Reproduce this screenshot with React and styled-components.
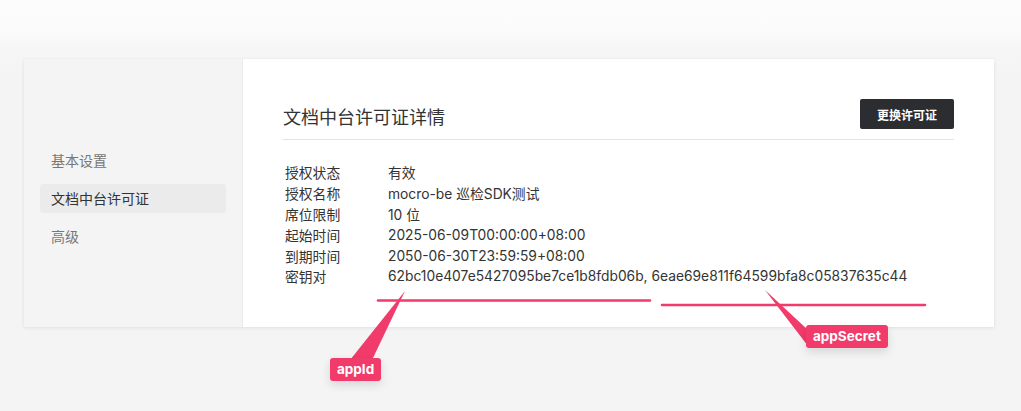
import React from 'react'
import styled, { createGlobalStyle } from 'styled-components'

const GlobalStyle = createGlobalStyle`
  html, body {
    margin: 0;
    padding: 0;
  }
  body {
    font-family: Inter, "Noto Sans CJK SC", "Noto Sans", sans-serif;
    background: #f4f4f4;
  }
`;

const Page = styled.div`
  position: relative;
  width: 1021px;
  height: 411px;
  box-sizing: border-box;
  padding: 59px 27px 0 24px;
  background: linear-gradient(to bottom, #fcfcfc 0px, #fbfbfb 30px, #f6f6f6 50px, #f4f4f4 80px);
  overflow: hidden;
`;

const Card = styled.div`
  display: flex;
  height: 268px;
  background: #fff;
  box-shadow: 0 1px 4px rgba(0, 0, 0, 0.08), 0 0 1px rgba(0, 0, 0, 0.06);
`;

const Sidebar = styled.div`
  width: 219px;
  flex-shrink: 0;
  background: #f4f4f4;
  border-right: 1px solid #ebebeb;
  box-sizing: border-box;
  padding: 87px 16px 0 16px;
  display: flex;
  flex-direction: column;
  gap: 9px;
`;

const NavItem = styled.div`
  height: 29px;
  line-height: 29px;
  padding-left: 11px;
  border-radius: 3px;
  font-size: 14px;
  color: ${({ active }) => (active ? '#333' : '#777')};
  background: ${({ active }) => (active ? '#ebebeb' : 'transparent')};
`;

const Main = styled.div`
  flex: 1;
  padding: 40px 40px 0 40px;
`;

const Header = styled.div`
  display: flex;
  align-items: center;
  justify-content: space-between;
  height: 30px;
  padding-bottom: 10px;
  border-bottom: 1px solid #e3e3e3;
`;

const Title = styled.h2`
  margin: 0;
  margin-top: 3px;
  font-size: 18px;
  font-weight: 400;
  color: #333;
`;

const Button = styled.button`
  height: 30px;
  width: 94px;
  border: none;
  border-radius: 2px;
  background: #2b2d30;
  color: #fff;
  font-family: inherit;
  font-size: 12px;
  font-weight: 600;
  cursor: pointer;
`;

const InfoList = styled.div`
  display: grid;
  grid-template-columns: 103px 1fr;
  grid-auto-rows: 20.8px;
  align-items: center;
  margin-top: 22px;
  padding-left: 2px;
  font-size: 13.8px;
  color: #333;
`;

const Label = styled.div`
  color: #333;
`;

const Value = styled.div`
  color: #333;
  white-space: nowrap;
`;

const Overlay = styled.svg`
  position: absolute;
  left: 0;
  top: 0;
  pointer-events: none;
`;

const Tag = styled.div`
  position: absolute;
  left: ${({ x }) => x}px;
  top: ${({ y }) => y}px;
  height: 23px;
  line-height: 23px;
  padding: 0 7px;
  border-radius: 3px;
  background: #f03b6b;
  color: #fff;
  font-size: 13.5px;
  font-weight: 700;
  box-shadow: 0 4px 10px rgba(0, 0, 0, 0.12);
`;

const rows = [
  ['授权状态', '有效'],
  ['授权名称', 'mocro-be 巡检SDK测试'],
  ['席位限制', '10 位'],
  ['起始时间', '2025-06-09T00:00:00+08:00'],
  ['到期时间', '2050-06-30T23:59:59+08:00'],
  ['密钥对', '62bc10e407e5427095be7ce1b8fdb06b, 6eae69e811f64599bfa8c05837635c44'],
];

export default function App() {
  return (
    <>
      <GlobalStyle />
      <Page>
        <Card>
          <Sidebar>
            <NavItem>基本设置</NavItem>
            <NavItem active>文档中台许可证</NavItem>
            <NavItem>高级</NavItem>
          </Sidebar>
          <Main>
            <Header>
              <Title>文档中台许可证详情</Title>
              <Button>更换许可证</Button>
            </Header>
            <InfoList>
              {rows.map(([k, v]) => (
                <React.Fragment key={k}>
                  <Label>{k}</Label>
                  <Value>{v}</Value>
                </React.Fragment>
              ))}
            </InfoList>
          </Main>
        </Card>

        <Overlay width="1021" height="411" viewBox="0 0 1021 411">
          <line x1="378" y1="300.5" x2="650" y2="300.5" stroke="#f03b6b" strokeWidth="2.5" strokeLinecap="round" />
          <line x1="662" y1="305" x2="925" y2="305" stroke="#f03b6b" strokeWidth="2.5" strokeLinecap="round" />
          <polygon points="405,291 350,360 372,360" fill="#f03b6b" />
          <polygon points="765,290 808,330 808,346" fill="#f03b6b" />
        </Overlay>
        <Tag x={330} y={358}>appId</Tag>
        <Tag x={806} y={325}>appSecret</Tag>
      </Page>
    </>
  )
}
